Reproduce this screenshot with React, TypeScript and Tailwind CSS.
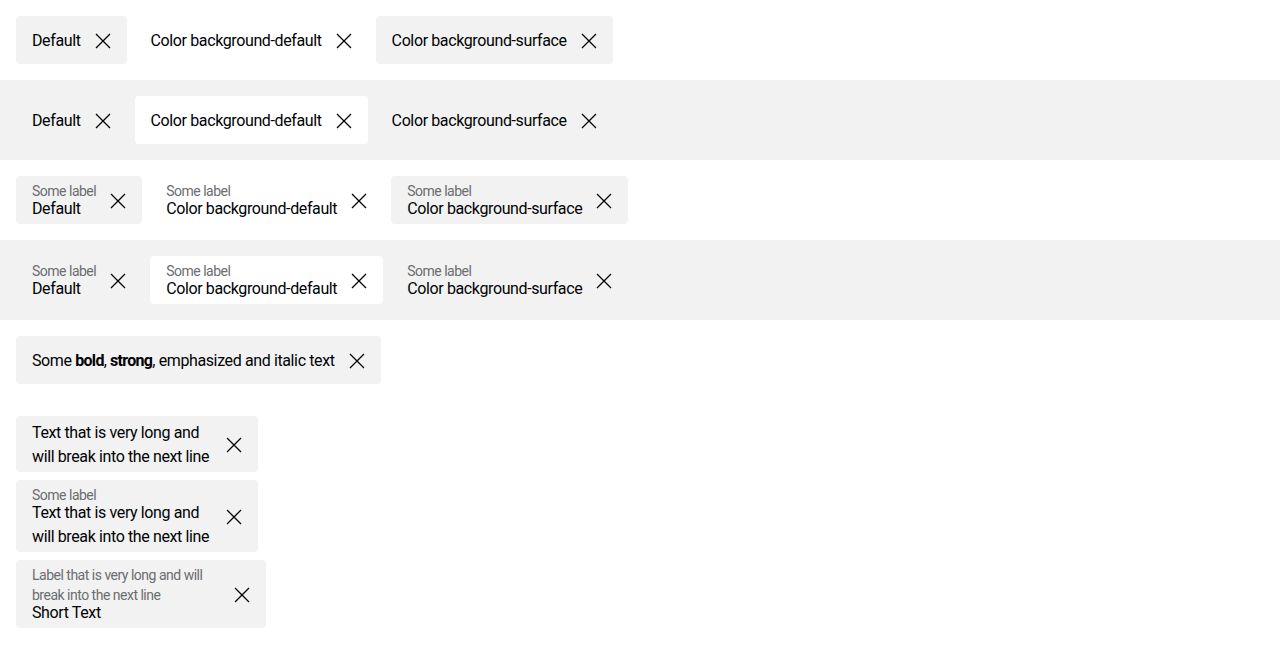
import React from 'react';

const font = "font-['Roboto','Liberation_Sans',sans-serif]";

function CloseIcon() {
    return (
        <svg width="24" height="24" viewBox="0 0 24 24" className="shrink-0">
            <path d="M5 5 L19 19 M19 5 L5 19" stroke="#010205" strokeWidth="1.3" fill="none"/>
        </svg>
    );
}

interface TagProps {
    bg: 'surface' | 'default' | 'none';
    label?: string;
    children: React.ReactNode;
    width?: string;
}

const Tag = ({bg, label, children, width}: TagProps) => {
    const bgClass = bg === 'surface' ? 'bg-[#f2f2f2]' : bg === 'default' ? 'bg-white' : 'bg-transparent';
    return (
        <button
            className={`${bgClass} ${width ?? ''} min-h-[48px] rounded-[4px] pl-4 pr-3 pt-[5px] pb-[3px] flex items-center gap-[10px] text-left`}>
            <span className={`flex flex-col ${width ? 'flex-1 min-w-0' : ''}`}>
                {label && <span className="text-[14px] leading-[20px] text-[#6b6d70] tracking-[-0.5px]">{label}</span>}
                <span className={`text-[16px] leading-[24px] text-[#010205] tracking-[-0.38px] ${label ? '-mt-1' : ''}`}>
                    {children}
                </span>
            </span>
            <CloseIcon/>
        </button>
    );
};

const App = () => {
    return (
        <div className={`${font} bg-white w-[1280px]`}>
            {/* plain tags */}
            <div className="p-4 flex gap-2 bg-white">
                <Tag bg="surface">Default</Tag>
                <Tag bg="none">Color background-default</Tag>
                <Tag bg="surface">Color background-surface</Tag>
            </div>
            <div className="p-4 flex gap-2 bg-[#f2f2f2]">
                <Tag bg="none">Default</Tag>
                <Tag bg="default">Color background-default</Tag>
                <Tag bg="none">Color background-surface</Tag>
            </div>

            {/* with label */}
            <div className="p-4 flex gap-2 bg-white">
                <Tag bg="surface" label="Some label">Default</Tag>
                <Tag bg="none" label="Some label">Color background-default</Tag>
                <Tag bg="surface" label="Some label">Color background-surface</Tag>
            </div>
            <div className="p-4 flex gap-2 bg-[#f2f2f2]">
                <Tag bg="none" label="Some label">Default</Tag>
                <Tag bg="default" label="Some label">Color background-default</Tag>
                <Tag bg="none" label="Some label">Color background-surface</Tag>
            </div>

            {/* markup */}
            <div className="p-4 flex bg-white">
                <Tag bg="surface">
                    Some <b className="font-bold tracking-[-0.7px]">bold</b>, <strong className="font-bold tracking-[-0.7px]">strong</strong>, <em className="not-italic">emphasized</em> and <i className="not-italic">italic</i> text
                </Tag>
            </div>

            {/* long texts */}
            <div className="p-4 flex flex-col items-start gap-2 bg-white">
                <Tag bg="surface" width="w-[242px]">Text that is very long and will break into the next line</Tag>
                <Tag bg="surface" width="w-[242px]" label="Some label">Text that is very long and will break into the next line</Tag>
                <Tag bg="surface" width="w-[250px]" label="Label that is very long and will break into the next line">Short Text</Tag>
            </div>
        </div>
    );
};

export default App;
